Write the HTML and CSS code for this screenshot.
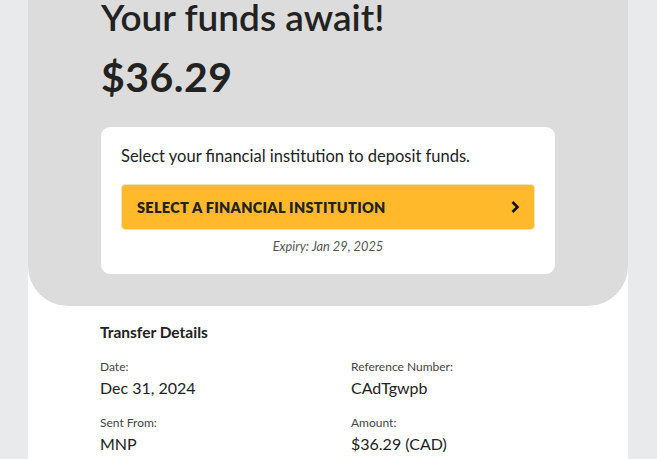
FILE: index.html
```html
<!DOCTYPE html>
<html>
<head>
<meta charset="utf-8">
<link rel="stylesheet" href="styles.css">
</head>
<body>
<main class="page">
  <section class="hero">
    <h1 class="hero-title">Your funds await!</h1>
    <div class="hero-amount">$36.29</div>
    <div class="card">
      <p class="card-text">Select your financial institution to deposit funds.</p>
      <button class="cta">
        <span>SELECT A FINANCIAL INSTITUTION</span>
        <svg class="chev" width="10" height="14" viewBox="0 0 10 14"><path d="M2.5 2 L7.5 7 L2.5 12" fill="none" stroke="#111" stroke-width="2.6" stroke-linejoin="miter"/></svg>
      </button>
      <p class="expiry">Expiry: Jan 29, 2025</p>
    </div>
  </section>
  <section class="details">
    <h2 class="details-title">Transfer Details</h2>
    <div class="grid">
      <div class="item"><div class="label">Date:</div><div class="value">Dec 31, 2024</div></div>
      <div class="item"><div class="label">Reference Number:</div><div class="value">CAdTgwpb</div></div>
      <div class="item"><div class="label">Sent From:</div><div class="value">MNP</div></div>
      <div class="item"><div class="label">Amount:</div><div class="value">$36.29 (CAD)</div></div>
    </div>
  </section>
</main>
</body>
</html>
```
FILE: styles.css
```css
html, body { margin: 0; padding: 0; }
body {
  background: #e9eaec;
  font-family: Lato, "Open Sans", sans-serif;
  color: #222;
  height: 459px;
  overflow: hidden;
}
.page {
  width: 600px;
  margin-left: 28px;
  background: #fff;
  min-height: 480px;
}
.hero {
  background: #dcdcdc;
  border-radius: 0 0 40px 40px;
  padding: 0 73px 32px;
}
.hero-title {
  margin: 0;
  font-size: 37px;
  font-weight: 600;
  line-height: 36px;
  color: #222;
  padding-top: 0;
  position: relative;
  top: 0;
  margin-top: -1px;
}
.hero-amount {
  font-size: 41px;
  font-weight: 700;
  line-height: 40px;
  margin-top: 22px;
  letter-spacing: 0.5px;
  color: #222;
}
.card {
  margin-top: 30px;
  background: #fff;
  border-radius: 9px;
  padding: 19px 20px 20px;
}
.card-text {
  margin: 0;
  font-size: 16.5px;
  line-height: 21px;
  color: #222;
}
.cta {
  margin-top: 17px;
  width: 100%;
  height: 46px;
  background: #ffb92a;
  border: 1px solid #f0e2c4;
  border-radius: 4px;
  display: flex;
  align-items: center;
  justify-content: space-between;
  padding: 0 14px 0 15px;
  font-family: inherit;
  font-weight: 800;
  font-size: 14.5px;
  letter-spacing: 0.3px;
  color: #222;
  box-sizing: border-box;
}
.chev { display: block; }
.expiry {
  margin: 9px 0 0;
  text-align: center;
  font-style: italic;
  font-size: 12.8px;
  line-height: 15px;
  color: #555;
}
.details {
  padding: 16px 72px 0;
}
.details-title {
  margin: 0;
  font-size: 15.5px;
  font-weight: 700;
  line-height: 20px;
  color: #222;
}
.grid {
  display: grid;
  grid-template-columns: 251px 1fr;
  row-gap: 16px;
  margin-top: 17px;
}
.label {
  font-size: 12px;
  line-height: 16px;
  color: #444;
}
.value {
  margin-top: 2px;
  font-size: 16px;
  line-height: 22px;
  color: #222;
}
```
